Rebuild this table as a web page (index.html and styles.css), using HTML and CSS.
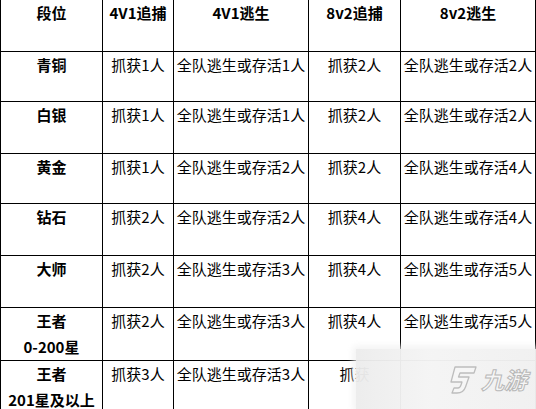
FILE: index.html
```html
<!DOCTYPE html>
<html lang="zh">
<head>
<meta charset="utf-8">
<link rel="stylesheet" href="styles.css">
</head>
<body>
<div class="page">
<table class="rank">
  <colgroup>
    <col class="c1"><col class="c2"><col class="c3"><col class="c4"><col class="c5">
  </colgroup>
  <tr class="head r51"><th>段位</th><th>4V1追捕</th><th>4V1逃生</th><th>8v2追捕</th><th>8v2逃生</th></tr>
  <tr class="r50"><th>青铜</th><td>抓获1人</td><td>全队逃生或存活1人</td><td>抓获2人</td><td>全队逃生或存活2人</td></tr>
  <tr class="r52"><th>白银</th><td>抓获1人</td><td>全队逃生或存活1人</td><td>抓获2人</td><td>全队逃生或存活2人</td></tr>
  <tr class="r50"><th>黄金</th><td>抓获1人</td><td>全队逃生或存活2人</td><td>抓获2人</td><td>全队逃生或存活4人</td></tr>
  <tr class="r52"><th>钻石</th><td>抓获2人</td><td>全队逃生或存活2人</td><td>抓获4人</td><td>全队逃生或存活4人</td></tr>
  <tr class="r52"><th>大师</th><td>抓获2人</td><td>全队逃生或存活3人</td><td>抓获4人</td><td>全队逃生或存活5人</td></tr>
  <tr class="r50"><th>王者<br>0-200星</th><td>抓获2人</td><td>全队逃生或存活3人</td><td>抓获4人</td><td>全队逃生或存活5人</td></tr>
  <tr class="r50"><th>王者<br>201星及以上</th><td>抓获3人</td><td>全队逃生或存活3人</td><td>抓获</td><td></td></tr>
</table>
<div class="mark">
  <svg class="mark-icon" viewBox="0 0 32 32" width="32" height="32">
    <path d="M9 3 H30 L28 9 H14 L12.5 13 H23 L19.5 23 Q17.5 29 11 29 H6 L8 24 H12 Q14 24 15 21 L16 18 H5 Z" fill="#f6f6f6" stroke="#bdbdbd" stroke-width="1.3" stroke-linejoin="round"/>
  </svg>
  <span class="mark-text">九游</span>
</div>
</div>
</body>
</html>
```
FILE: styles.css
```css
html, body {
  margin: 0;
  padding: 0;
  background: #ffffff;
}
.page {
  position: relative;
  width: 536px;
  height: 409px;
  overflow: hidden;
}
.rank {
  border-collapse: collapse;
  table-layout: fixed;
  width: 535px;
  font-family: "Noto Sans CJK SC", "Liberation Sans", sans-serif;
  font-size: 15px;
  line-height: 26px;
  color: #000;
}
.c1 { width: 102px; }
.c2 { width: 71px; }
.c3 { width: 135px; }
.c4 { width: 92px; }
.c5 { width: 135px; }
.rank th, .rank td {
  border: 1px solid #000;
  padding: 0;
  vertical-align: top;
  text-align: center;
  white-space: nowrap;
  overflow: visible;
}
.rank .head th { border-top: none; }
.rank th { font-weight: bold; }
.rank td { font-weight: normal; }
.r50 { height: 50px; }
.r51 { height: 51px; }
.r52 { height: 52px; }
.mark {
  position: absolute;
  left: 356px;
  top: 349px;
  width: 180px;
  height: 60px;
  background: linear-gradient(90deg, rgba(236,236,236,0.96) 0%, rgba(244,244,244,0.97) 40%, rgba(240,240,240,0.97) 100%);
  box-shadow: 0 0 6px 3px rgba(240,240,240,0.8);
  display: flex;
  align-items: flex-start;
  padding: 15px 0 0 90px;
  box-sizing: border-box;
  gap: 3px;
}
.mark-icon { display: block; flex: none; }
.mark-text {
  font-family: "Noto Sans CJK SC", sans-serif;
  font-size: 23px;
  line-height: 30px;
  font-style: italic;
  font-weight: bold;
  color: #f6f6f6;
  -webkit-text-stroke: 1px #b8b8b8;
  white-space: nowrap;
}
```
